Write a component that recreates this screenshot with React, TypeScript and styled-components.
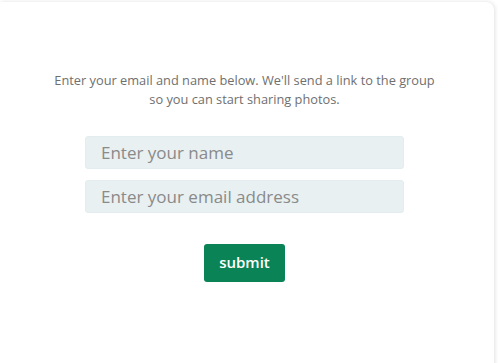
import React from "react";
import styled, { createGlobalStyle } from "styled-components";

const Global = createGlobalStyle`
  html, body { margin: 0; padding: 0; background: #ffffff; }
  body { font-family: "Open Sans", "Liberation Sans", sans-serif; }
  * { box-sizing: border-box; }
`;

const Page = styled.div`
  width: 498px;
  height: 363px;
  padding: 2px 4px 0 0;
  overflow: hidden;
`;

const Card = styled.div`
  width: 494px;
  height: 380px;
  background: #ffffff;
  border-radius: 0 8px 8px 0;
  box-shadow: 1px 0 4px rgba(0, 0, 0, 0.12);
  display: flex;
  flex-direction: column;
  align-items: center;
  padding: 69px 5px 0 0;
`;

const Intro = styled.p`
  margin: 0;
  width: 392px;
  text-align: center;
  font-size: 12.8px;
  line-height: 19px;
  color: #6f6f6f;
`;

const Form = styled.form`
  margin-top: 27px;
  display: flex;
  flex-direction: column;
  align-items: center;
  gap: 11px;
`;

const Field = styled.input`
  width: 319px;
  height: 33px;
  border: 1px solid #e3ecee;
  border-radius: 3px;
  background: #e8f0f1;
  padding: 0 15px;
  font-family: inherit;
  font-size: 17px;
  color: #555;
  outline: none;
  &::placeholder { color: #8a8a8a; }
`;

const Submit = styled.button`
  margin-top: 20px;
  width: 81px;
  height: 38px;
  border: none;
  border-radius: 3px;
  background: #0a8456;
  color: #ffffff;
  font-family: inherit;
  font-size: 15px;
  font-weight: 600;
  padding: 0 0 3px;
  cursor: pointer;
`;

export default function App() {
  return (
    <>
      <Global />
      <Page>
        <Card>
          <Intro>
            Enter your email and name below. We'll send a link to the group so you can start sharing photos.
          </Intro>
          <Form onSubmit={(e) => e.preventDefault()}>
            <Field type="text" placeholder="Enter your name" />
            <Field type="email" placeholder="Enter your email address" />
            <Submit type="submit">submit</Submit>
          </Form>
        </Card>
      </Page>
    </>
  );
}
